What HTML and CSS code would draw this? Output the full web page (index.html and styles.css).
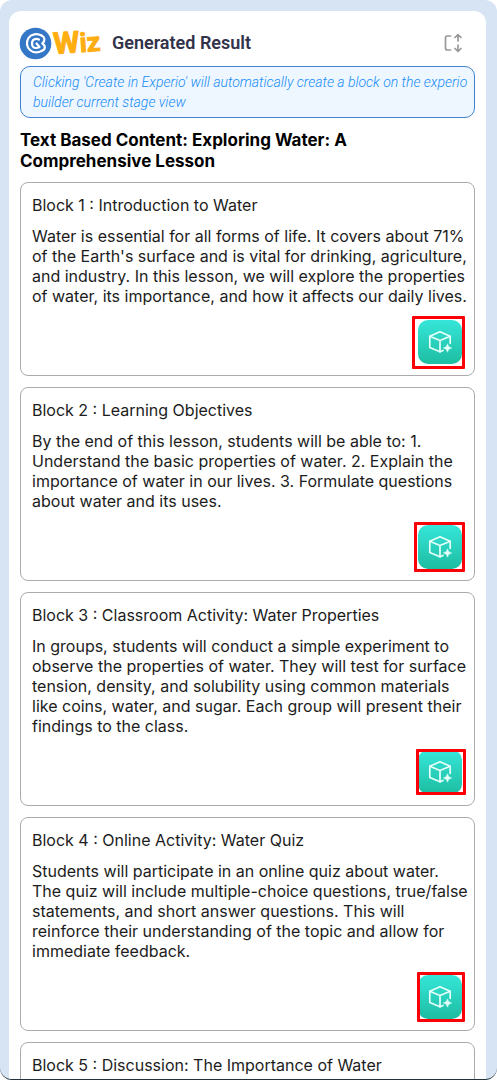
FILE: index.html
```html
<!DOCTYPE html>
<html lang="en">
<head>
<meta charset="utf-8">
<meta name="viewport" content="width=device-width, initial-scale=1">
<title>Generated Result</title>
<link rel="stylesheet" href="styles.css">
</head>
<body>
<svg class="sprite" aria-hidden="true">
  <symbol id="cube" viewBox="0 0 24 24">
    <g fill="none" stroke="#e6fffa" stroke-width="1.700" stroke-linejoin="round" stroke-linecap="round">
      <path d="M15 20.400 12 21.800 1.800 17.500V6.300L12 1.800l10.200 4.500v7"/>
      <path d="M1.800 6.300 12 10.500l10.200-4.200M12 10.500v11.300"/>
    </g>
    <path fill="#e6fffa" stroke="#e6fffa" stroke-width=".5" d="M19.500 13.800q.7 3.700 4.300 4.200-3.600.5-4.300 4.200-.7-3.700-4.300-4.200 3.600-.5 4.300-4.200z"/>
  </symbol>
</svg>
<div class="frame">
  <main class="panel">
    <header class="header">
      <svg class="logo" viewBox="0 0 82 36" role="img" aria-label="eWiz">
        <circle cx="15.500" cy="18.500" r="15.800" fill="#3577c7"/>
        <g fill="none" stroke="#fff" stroke-linejoin="round" stroke-linecap="round">
          <path stroke-width="2.200" d="M21.500 10.500C17 8 11 9 8.500 13s-2 9 1.500 12 8 3 12 .8"/>
          <path stroke-width="2.200" d="M21.500 10.500c3.500 1.500 4 5 .8 8 3.500 2 3.200 6-.3 7.300"/>
          <path stroke-width="2.200" d="M19 14.500c-3-1.500-7-.5-7 4s4 5.500 7.500 3.500l-3-3.500"/>
        </g>
        <text class="wiz" x="34" y="29" transform="rotate(-4 34 29)">W<tspan class="wiz-tail">iz</tspan></text>
      </svg>
      <h1 class="heading">Generated Result</h1>
      <button class="expand" type="button" aria-label="Expand">
        <svg viewBox="0 0 18 20" width="18" height="20" fill="none" stroke="#999" stroke-width="1.700" stroke-linecap="round" stroke-linejoin="round"><path d="M6.500 3H3Q1.500 3 1.500 4.500v10.500Q1.500 17 3.500 17h3"/><path d="M14 8V2m-3 2.500 3-3 3 3M14 12v6m-3-2.500 3 3 3-3"/></svg>
      </button>
    </header>
    <p class="notice">Clicking 'Create in Experio' will automatically create a block on the experio builder current stage view</p>
    <h2 class="title">Text Based Content: Exploring Water: A Comprehensive Lesson</h2>
    <div class="blocks">
      <section class="card">
        <h3 class="name">Block 1 : Introduction to Water</h3>
        <p class="copy">Water is essential for all forms of life. It covers about 71% of the Earth's surface and is vital for drinking, agriculture, and industry. In this lesson, we will explore the properties of water, its importance, and how it affects our daily lives.</p>
        <div class="action"><button class="create" type="button" aria-label="Create in Experio"><svg class="cube"><use href="#cube"/></svg></button><span class="mark mark-wide"></span></div>
      </section>
      <section class="card">
        <h3 class="name">Block 2 : Learning Objectives</h3>
        <p class="copy">By the end of this lesson, students will be able to: 1. Understand the basic properties of water. 2. Explain the importance of water in our lives. 3. Formulate questions about water and its uses.</p>
        <div class="action"><button class="create" type="button" aria-label="Create in Experio"><svg class="cube"><use href="#cube"/></svg></button><span class="mark mark-medium"></span></div>
      </section>
      <section class="card">
        <h3 class="name">Block 3 : Classroom Activity: Water Properties</h3>
        <p class="copy">In groups, students will conduct a simple experiment to observe the properties of water. They will test for surface tension, density, and solubility using common materials like coins, water, and sugar. Each group will present their findings to the class.</p>
        <div class="action"><button class="create" type="button" aria-label="Create in Experio"><svg class="cube"><use href="#cube"/></svg></button><span class="mark mark-short"></span></div>
      </section>
      <section class="card">
        <h3 class="name">Block 4 : Online Activity: Water Quiz</h3>
        <p class="copy">Students will participate in an online quiz about water. The quiz will include multiple-choice questions, true/false statements, and short answer questions. This will reinforce their understanding of the topic and allow for immediate feedback.</p>
        <div class="action"><button class="create" type="button" aria-label="Create in Experio"><svg class="cube"><use href="#cube"/></svg></button><span class="mark mark-narrow"></span></div>
      </section>
      <section class="card">
        <h3 class="name">Block 5 : Discussion: The Importance of Water</h3>
      </section>
    </div>
  </main>
</div>
</body>
</html>
```
FILE: styles.css
```css
* { box-sizing: border-box; }
body { margin: 0; background: #fff; color: #1c1c1c; font: 16px/20px Inter, sans-serif; }
h1, h2, h3, p { margin: 0; }
button { border: 0; padding: 0; background: none; }
.sprite { position: absolute; width: 0; height: 0; }
.frame { height: 100vh; overflow: hidden; padding: 11px 11px 0 9px; background: #d7e4f4; border-radius: 12px; border-bottom: 1px solid #26323a; }
.panel { min-height: 100%; padding: 14px 11px 0; background: #fff; border-radius: 12px 12px 0 0; }
.header { display: flex; align-items: center; height: 36px; }
.logo { width: 82px; height: 36px; overflow: visible; }
.wiz { font: bold 30px Roboto, sans-serif; fill: #ffae12; stroke: #ffae12; stroke-width: 1px; stroke-linejoin: round; }
.wiz-tail { font-size: 27px; }
.heading { flex: 1; margin-left: 10px; font: 600 18px/24px Roboto, sans-serif; color: #32324a; }
.expand { display: flex; margin-right: 13px; }
.notice { margin-top: 5px; padding: 5px 2px 5px 12px; border: 1px solid #3f80d0; border-radius: 10px; background: #eef7ff; color: #168bf8; font: italic 300 14px/20px Roboto, sans-serif; }
.title { margin-top: 12px; font-size: 17px; line-height: 21px; font-weight: 700; color: #000; }
.blocks { display: flex; flex-direction: column; gap: 11px; margin-top: 10px; }
.card { padding: 12px 11px 11px; border: 1px solid #ababab; border-radius: 8px; }
.name { font-size: 16px; line-height: 20px; font-weight: 400; }
.copy { margin: 11px -7px 14px 0; }
.action { position: relative; width: 44px; margin: 0 1px 0 auto; }
.create { display: flex; align-items: center; justify-content: center; width: 44px; height: 44px; border-radius: 10px; background: linear-gradient(#36e6d9, #1dbda1); }
.cube { width: 24px; height: 24px; }
.mark { position: absolute; border: 3px solid #fb0007; border-radius: 1px; pointer-events: none; }
.mark-wide { inset: -4px -3px -5px -6px; }
.mark-medium { inset: -3px -3px -3px -4px; }
.mark-short { inset: -1px -4px -1px -2px; }
.mark-narrow { inset: -3px -3px -3px -1px; }
```
